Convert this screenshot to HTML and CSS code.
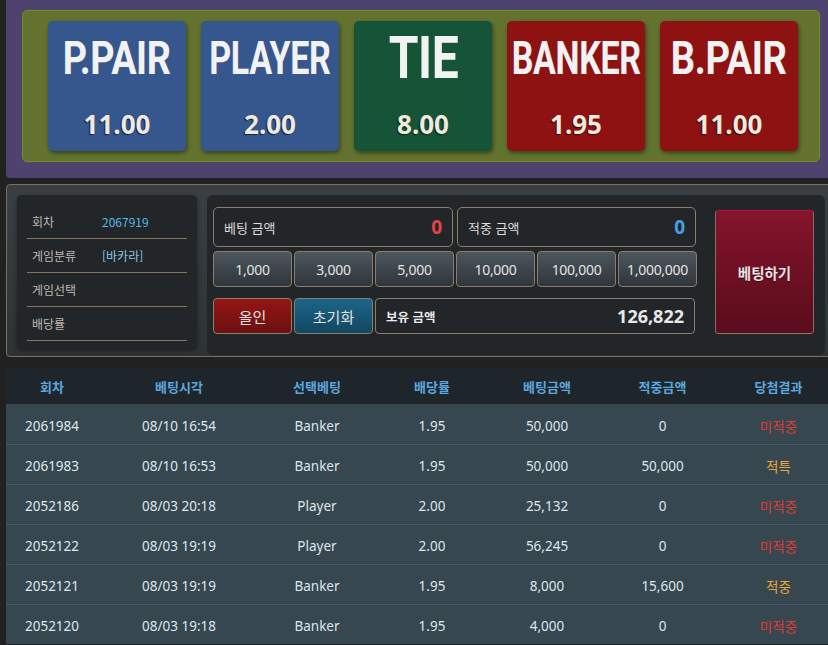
FILE: index.html
```html
<!DOCTYPE html>
<html lang="ko">
<head>
    <meta charset="UTF-8">
    <meta name="viewport" content="width=device-width, initial-scale=1.0">
    <title>바카라 베팅</title>
    <link rel="stylesheet" href="styles.css">
</head>
<body>
    <div class="page">
        <section class="odds-board">
            <div class="odds-row">
                <div class="odds-card card-blue fit-pp">
                    <div class="odds-head"><span class="odds-name">P.PAIR</span></div>
                    <div class="odds-rate">11.00</div>
                </div>
                <div class="odds-card card-blue fit-player">
                    <div class="odds-head"><span class="odds-name">PLAYER</span></div>
                    <div class="odds-rate">2.00</div>
                </div>
                <div class="odds-card card-green fit-tie">
                    <div class="odds-head"><span class="odds-name">TIE</span></div>
                    <div class="odds-rate">8.00</div>
                </div>
                <div class="odds-card card-red fit-banker">
                    <div class="odds-head"><span class="odds-name">BANKER</span></div>
                    <div class="odds-rate">1.95</div>
                </div>
                <div class="odds-card card-red fit-bp">
                    <div class="odds-head"><span class="odds-name">B.PAIR</span></div>
                    <div class="odds-rate">11.00</div>
                </div>
            </div>
        </section>

        <section class="bet-panel">
            <div class="round-info">
                <div class="info-row">
                    <span class="info-label">회차</span>
                    <span class="info-value round-no">2067919</span>
                </div>
                <div class="info-row">
                    <span class="info-label">게임분류</span>
                    <span class="info-value game-type">[바카라]</span>
                </div>
                <div class="info-row">
                    <span class="info-label">게임선택</span>
                    <span class="info-value"></span>
                </div>
                <div class="info-row">
                    <span class="info-label">배당률</span>
                    <span class="info-value"></span>
                </div>
            </div>

            <div class="bet-form">
                <div class="bet-controls">
                    <div class="amount-row">
                        <div class="amount-box">
                            <span class="amount-label">베팅 금액</span>
                            <span class="amount-num num-red">0</span>
                        </div>
                        <div class="amount-box">
                            <span class="amount-label">적중 금액</span>
                            <span class="amount-num num-blue">0</span>
                        </div>
                    </div>
                    <div class="chip-row">
                        <button class="chip">1,000</button>
                        <button class="chip">3,000</button>
                        <button class="chip">5,000</button>
                        <button class="chip">10,000</button>
                        <button class="chip">100,000</button>
                        <button class="chip">1,000,000</button>
                    </div>
                    <div class="action-row">
                        <button class="action-btn btn-allin">올인</button>
                        <button class="action-btn btn-reset">초기화</button>
                        <div class="balance-box">
                            <span class="balance-label">보유 금액</span>
                            <span class="balance-num">126,822</span>
                        </div>
                    </div>
                </div>
                <button class="bet-submit">베팅하기</button>
            </div>
        </section>

        <table class="history">
            <colgroup>
                <col class="col-1">
                <col class="col-2">
                <col class="col-3">
                <col class="col-4">
                <col class="col-5">
                <col class="col-6">
                <col class="col-7">
            </colgroup>
            <thead>
                <tr>
                    <th>회차</th>
                    <th>베팅시각</th>
                    <th>선택베팅</th>
                    <th>배당률</th>
                    <th>베팅금액</th>
                    <th>적중금액</th>
                    <th>당첨결과</th>
                </tr>
            </thead>
            <tbody>
                <tr>
                    <td>2061984</td><td>08/10 16:54</td><td>Banker</td><td>1.95</td><td>50,000</td><td>0</td><td class="res-lose">미적중</td>
                </tr>
                <tr>
                    <td>2061983</td><td>08/10 16:53</td><td>Banker</td><td>1.95</td><td>50,000</td><td>50,000</td><td class="res-win">적특</td>
                </tr>
                <tr>
                    <td>2052186</td><td>08/03 20:18</td><td>Player</td><td>2.00</td><td>25,132</td><td>0</td><td class="res-lose">미적중</td>
                </tr>
                <tr>
                    <td>2052122</td><td>08/03 19:19</td><td>Player</td><td>2.00</td><td>56,245</td><td>0</td><td class="res-lose">미적중</td>
                </tr>
                <tr>
                    <td>2052121</td><td>08/03 19:19</td><td>Banker</td><td>1.95</td><td>8,000</td><td>15,600</td><td class="res-win">적중</td>
                </tr>
                <tr>
                    <td>2052120</td><td>08/03 19:18</td><td>Banker</td><td>1.95</td><td>4,000</td><td>0</td><td class="res-lose">미적중</td>
                </tr>
            </tbody>
        </table>
    </div>
</body>
</html>
```

FILE: styles.css
```css
html, body {
    margin: 0;
    overflow: hidden;
    background: #212121;
}

body {
    font-family: "Noto Sans", "Noto Sans CJK KR", sans-serif;
    color: #dde4ea;
}

.page {
    width: 830px;
    margin-left: 6px;
}

/* 배당 카드 */
.odds-board {
    background: #4d436e;
    border-radius: 0 0 4px 4px;
    padding: 10px 16px 16px 16px;
}

.odds-row {
    display: flex;
    gap: 15px;
    padding: 10px 0 10px 25px;
    background: #63732f;
    border: 1px solid #6e8f27;
    border-radius: 5px;
}

.odds-card {
    width: 138px;
    height: 130px;
    border-radius: 5px;
    box-shadow: 1px 2px 4px rgba(0, 0, 0, 0.45);
    display: flex;
    flex-direction: column;
    align-items: center;
}

.card-blue { background: #36578d; }
.card-green { background: #155436; }
.card-red { background: #8e1212; }

.odds-head {
    height: 74px;
    display: flex;
    align-items: center;
    justify-content: center;
}

.odds-name {
    display: inline-block;
    font-family: Roboto, "Noto Sans", sans-serif;
    font-weight: 700;
    font-size: 46px;
    line-height: 1;
    color: #f2f2f2;
    white-space: nowrap;
    letter-spacing: -0.5px;
}

.fit-pp .odds-name { transform: scaleX(0.82); }
.fit-player .odds-name { transform: scaleX(0.74); }
.fit-tie .odds-name { font-size: 60px; transform: scaleX(0.8); }
.fit-banker .odds-name { transform: scaleX(0.74); }
.fit-bp .odds-name { transform: scaleX(0.83); }

.odds-rate {
    margin-top: 14px;
    font-weight: 700;
    font-size: 26px;
    line-height: 30px;
    color: #efe9de;
    text-shadow: -1px 1px 1px rgba(0, 0, 0, 0.6);
}

/* 베팅 패널 */
.bet-panel {
    margin-top: 6px;
    display: flex;
    align-items: flex-start;
    gap: 10px;
    padding: 10px 10px 1px 10px;
    border: 1px solid #7b705c;
    border-radius: 4px;
    background: linear-gradient(#393f42, #2e3336);
}

.round-info {
    width: 160px;
    padding: 10px 10px 8px 10px;
    background: #222628;
    border-radius: 5px;
    box-shadow: 0 2px 4px rgba(0, 0, 0, 0.4);
}

.info-row {
    display: flex;
    align-items: center;
    height: 33px;
    padding-left: 5px;
    border-bottom: 1px solid #85765e;
    font-family: "Noto Sans CJK KR", sans-serif;
    font-size: 12px;
}

.info-label {
    width: 70px;
    color: #bdb9b2;
}

.round-no { color: #5bb6e4; }
.game-type { color: #8ec6e6; }

.bet-form {
    flex: 1;
    display: flex;
    align-items: center;
    padding: 12px 11px 21px 6px;
    background: #232628;
    border-radius: 6px;
}

.bet-controls {
    width: 484px;
}

.amount-row {
    display: flex;
    gap: 4px;
}

.amount-box {
    width: 240px;
    height: 40px;
    box-sizing: border-box;
    display: flex;
    align-items: center;
    justify-content: space-between;
    padding: 0 10px 0 10px;
    border: 1px solid #8a7f6b;
    border-radius: 5px;
}

.amount-box:last-child { width: 239px; }

.amount-label {
    font-family: "Noto Sans CJK KR", sans-serif;
    font-size: 13px;
    color: #dcdcdc;
}

.amount-num {
    font-weight: 700;
    font-size: 19px;
}

.num-red { color: #e04545; }
.num-blue { color: #4a9ee2; }

.chip-row {
    display: flex;
    gap: 2px;
    margin-top: 4px;
}

.chip, .action-btn {
    width: 79px;
    height: 36px;
    padding: 0;
    border: 1px solid #8a7f6b;
    border-radius: 4px;
    font-family: "Noto Sans", "Noto Sans CJK KR", sans-serif;
    font-size: 14px;
    color: #e2e2e2;
    cursor: pointer;
}

.chip {
    background: linear-gradient(#4c565d, #2f363b);
    letter-spacing: -0.3px;
}

.action-row {
    display: flex;
    gap: 2px;
    margin-top: 11px;
}

.action-btn {
    font-family: "Noto Sans CJK KR", sans-serif;
    font-size: 15px;
}

.btn-allin { background: linear-gradient(#941515, #6c1010); }
.btn-reset { background: linear-gradient(#1c6589, #124761); }

.balance-box {
    width: 320px;
    height: 36px;
    box-sizing: border-box;
    display: flex;
    align-items: center;
    justify-content: space-between;
    padding: 0 10px;
    border: 1px solid #8a7f6b;
    border-radius: 4px;
}

.balance-label {
    font-family: "Noto Sans CJK KR", sans-serif;
    font-weight: 700;
    font-size: 12.5px;
    color: #eaeaea;
}

.balance-num {
    font-weight: 700;
    font-size: 18px;
    color: #e8e8e8;
}

.bet-submit {
    margin-left: auto;
    align-self: flex-end;
    width: 99px;
    height: 124px;
    padding: 0;
    border: 1px solid;
    border-color: #b3162b #8c6a5c #8a7464 #8c6a5c;
    border-radius: 4px;
    background: linear-gradient(#84142c, #5a0c1c);
    font-family: "Noto Sans CJK KR", sans-serif;
    font-weight: 700;
    font-size: 14.5px;
    color: #ebe4e4;
    text-shadow: 0 1px 1px rgba(0, 0, 0, 0.5);
    cursor: pointer;
}

/* 베팅 내역 */
.history {
    width: 830px;
    margin-top: 11px;
    border-collapse: collapse;
    table-layout: fixed;
    font-size: 13.5px;
}

.col-1 { width: 92px; }
.col-2 { width: 162px; }
.col-3 { width: 114px; }
.col-4 { width: 116px; }
.col-5 { width: 114px; }
.col-6 { width: 117px; }
.col-7 { width: 115px; }

.history th {
    height: 36px;
    padding: 0;
    background: #1f262b;
    font-family: "Noto Sans CJK KR", sans-serif;
    font-weight: 700;
    font-size: 13px;
    color: #5ca7df;
}

.history td {
    height: 37px;
    padding: 2px 0 0 0;
    text-align: center;
    background: #37474f;
    border-top: 1px solid #445b69;
    color: #dde6ee;
}

.history tbody tr:first-child td { border-top: none; height: 37px; padding-top: 3px; }

.res-lose { color: #e03a3a !important; font-family: "Noto Sans CJK KR", sans-serif; }
.res-win { color: #eea536 !important; font-family: "Noto Sans CJK KR", sans-serif; }
```
